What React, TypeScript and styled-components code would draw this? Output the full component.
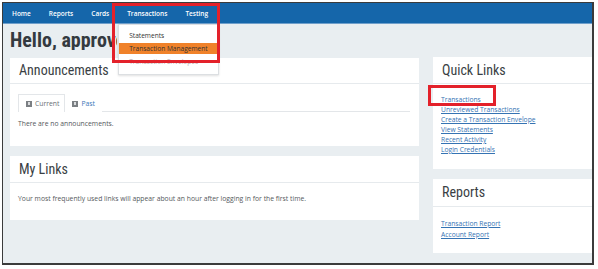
import React from "react";
import styled, { createGlobalStyle } from "styled-components";

const Global = createGlobalStyle`
  html, body { margin: 0; padding: 0; background: #ffffff; }
  body { width: 598px; height: 269px; overflow: hidden; font-family: "Open Sans", "Liberation Sans", sans-serif; }
  * { box-sizing: border-box; }
`;

const Frame = styled.div`
  position: relative;
  margin: 2px 0 0 2px;
  width: 592px;
  height: 263px;
  border: 1px solid #3b3b3b;
  border-right-width: 2px;
  border-bottom-width: 2px;
  background: #e9eef1;
  display: flex;
  flex-direction: column;
`;

const Nav = styled.nav`
  height: 21px;
  background: #1566aa;
  border-bottom: 1px solid #6f9fcb;
  display: flex;
  align-items: stretch;
  flex-shrink: 0;
`;

const NavItem = styled.div`
  position: relative;
  padding: 1px 9px 0;
  display: flex;
  align-items: center;
  color: #ffffff;
  font-size: 6.5px;
  font-weight: 600;
  height: 20px;
`;

const Dropdown = styled.div`
  position: absolute;
  left: 0;
  top: 21px;
  width: 101px;
  background: #ffffff;
  border: 1px solid #dcdfe2;
  box-shadow: 0 1px 2px rgba(0, 0, 0, 0.12);
  padding: 5px 0 5px;
  z-index: 5;
`;

const DropItem = styled.div<{ $active?: boolean; $faded?: boolean }>`
  height: 11px;
  line-height: 11px;
  margin-bottom: 2px;
  padding-left: 10px;
  font-size: 6.6px;
  font-weight: 400;
  white-space: nowrap;
  color: ${(p) => (p.$faded ? "#b9a9ab" : "#333333")};
  background: ${(p) => (p.$active ? "#f0822a" : "transparent")};
`;

const RedBox = styled.div<{ $l: number; $t: number; $w: number; $h: number }>`
  position: absolute;
  left: ${(p) => p.$l}px;
  top: ${(p) => p.$t}px;
  width: ${(p) => p.$w}px;
  height: ${(p) => p.$h}px;
  border: 3px solid #e3212a;
  pointer-events: none;
  z-index: 10;
`;

const Main = styled.main`
  flex: 1;
  padding: 6px 0 0 7px;
  overflow: hidden;
`;

const Title = styled.h1`
  margin: 0 0 7px;
  width: 107px;
  overflow: hidden;
  font-family: "Liberation Sans Narrow", "Roboto Condensed", "Roboto", sans-serif;
  font-weight: 700;
  font-size: 20px;
  line-height: 20px;
  color: #343a40;
  white-space: nowrap;
`;

const Columns = styled.div`
  display: grid;
  grid-template-columns: 409px 170px;
  column-gap: 14px;
  align-items: start;
`;

const Column = styled.div<{ $offset?: number }>`
  display: flex;
  flex-direction: column;
  gap: 10px;
  margin-top: ${(p) => p.$offset ?? 0}px;
`;

const Panel = styled.section`
  background: #ffffff;
`;

const PanelHeader = styled.div<{ $h?: number }>`
  height: ${(p) => p.$h ?? 27}px;
  line-height: ${(p) => (p.$h ?? 27) - 1}px;
  border-bottom: 1px solid #e6eaed;
  padding-left: 9px;
  font-family: "Roboto Condensed", "Liberation Sans Narrow", "Roboto", sans-serif;
  font-size: 14px;
  font-weight: 400;
  color: #3a3f44;
`;

const PanelBody = styled.div<{ $pt: number; $pb: number }>`
  padding: ${(p) => p.$pt}px 9px ${(p) => p.$pb}px 8px;
`;

const Tabs = styled.div`
  display: flex;
  height: 18px;
  border-bottom: 1px solid #e3e6e9;
  margin-bottom: 7px;
`;

const Tab = styled.div<{ $active?: boolean }>`
  display: flex;
  align-items: center;
  gap: 3px;
  height: 18px;
  padding: 0 ${(p) => (p.$active ? 5 : 6)}px 0 ${(p) => (p.$active ? 7 : 6)}px;
  font-size: 6.8px;
  color: ${(p) => (p.$active ? "#6a6f74" : "#3b78b8")};
  background: #ffffff;
  border: 1px solid ${(p) => (p.$active ? "#e3e6e9" : "transparent")};
  border-bottom: none;
  margin-bottom: -1px;
`;

const TabIcon = styled.span`
  position: relative;
  width: 6px;
  height: 6px;
  background: #7b7f83;
  &::after {
    content: "";
    position: absolute;
    left: 2px;
    top: 1.5px;
    width: 2px;
    height: 3px;
    background: #d9dbdd;
  }
`;

const BodyText = styled.p`
  margin: 0;
  font-size: 6.8px;
  line-height: 10px;
  color: #55595d;
  white-space: nowrap;
`;

const LinkList = styled.div<{ $lh: number }>`
  display: flex;
  flex-direction: column;
  line-height: ${(p) => p.$lh}px;
`;

const LinkItem = styled.a`
  position: relative;
  align-self: flex-start;
  font-size: 6.7px;
  color: #3573b3;
  text-decoration: underline;
  white-space: nowrap;
`;

const quickLinks = [
  "Transactions",
  "Unreviewed Transactions",
  "Create a Transaction Envelope",
  "View Statements",
  "Recent Activity",
  "Login Credentials",
];

export default function App() {
  return (
    <>
      <Global />
      <Frame>
        <Nav>
          <NavItem>Home</NavItem>
          <NavItem>Reports</NavItem>
          <NavItem>Cards</NavItem>
          <NavItem>
            Transactions
            <Dropdown>
              <DropItem>Statements</DropItem>
              <DropItem $active>Transaction Management</DropItem>
              <DropItem $faded>Transaction Envelopes</DropItem>
            </Dropdown>
            <RedBox $l={-6} $t={0} $w={108} $h={60} />
          </NavItem>
          <NavItem>Testing</NavItem>
        </Nav>
        <Main>
          <Title>Hello, approver</Title>
          <Columns>
            <Column $offset={1}>
              <Panel>
                <PanelHeader $h={26}>Announcements</PanelHeader>
                <PanelBody $pt={10} $pb={17}>
                  <Tabs>
                    <Tab $active>
                      <TabIcon />
                      Current
                    </Tab>
                    <Tab>
                      <TabIcon />
                      Past
                    </Tab>
                  </Tabs>
                  <BodyText>There are no announcements.</BodyText>
                </PanelBody>
              </Panel>
              <Panel>
                <PanelHeader>My Links</PanelHeader>
                <PanelBody $pt={11} $pb={16}>
                  <BodyText>
                    Your most frequently used links will appear about an hour after logging in for the first time.
                  </BodyText>
                </PanelBody>
              </Panel>
            </Column>
            <Column>
              <Panel>
                <PanelHeader>Quick Links</PanelHeader>
                <PanelBody $pt={11} $pb={14}>
                  <LinkList $lh={10}>
                    {quickLinks.map((l, i) => (
                      <LinkItem key={l}>
                        {l}
                        {i === 0 && <RedBox $l={-13} $t={-10} $w={68} $h={21} />}
                      </LinkItem>
                    ))}
                  </LinkList>
                </PanelBody>
              </Panel>
              <Panel>
                <PanelHeader $h={28}>Reports</PanelHeader>
                <PanelBody $pt={11} $pb={13}>
                  <LinkList $lh={11}>
                    <LinkItem>Transaction Report</LinkItem>
                    <LinkItem>Account Report</LinkItem>
                  </LinkList>
                </PanelBody>
              </Panel>
            </Column>
          </Columns>
        </Main>
      </Frame>
    </>
  );
}
